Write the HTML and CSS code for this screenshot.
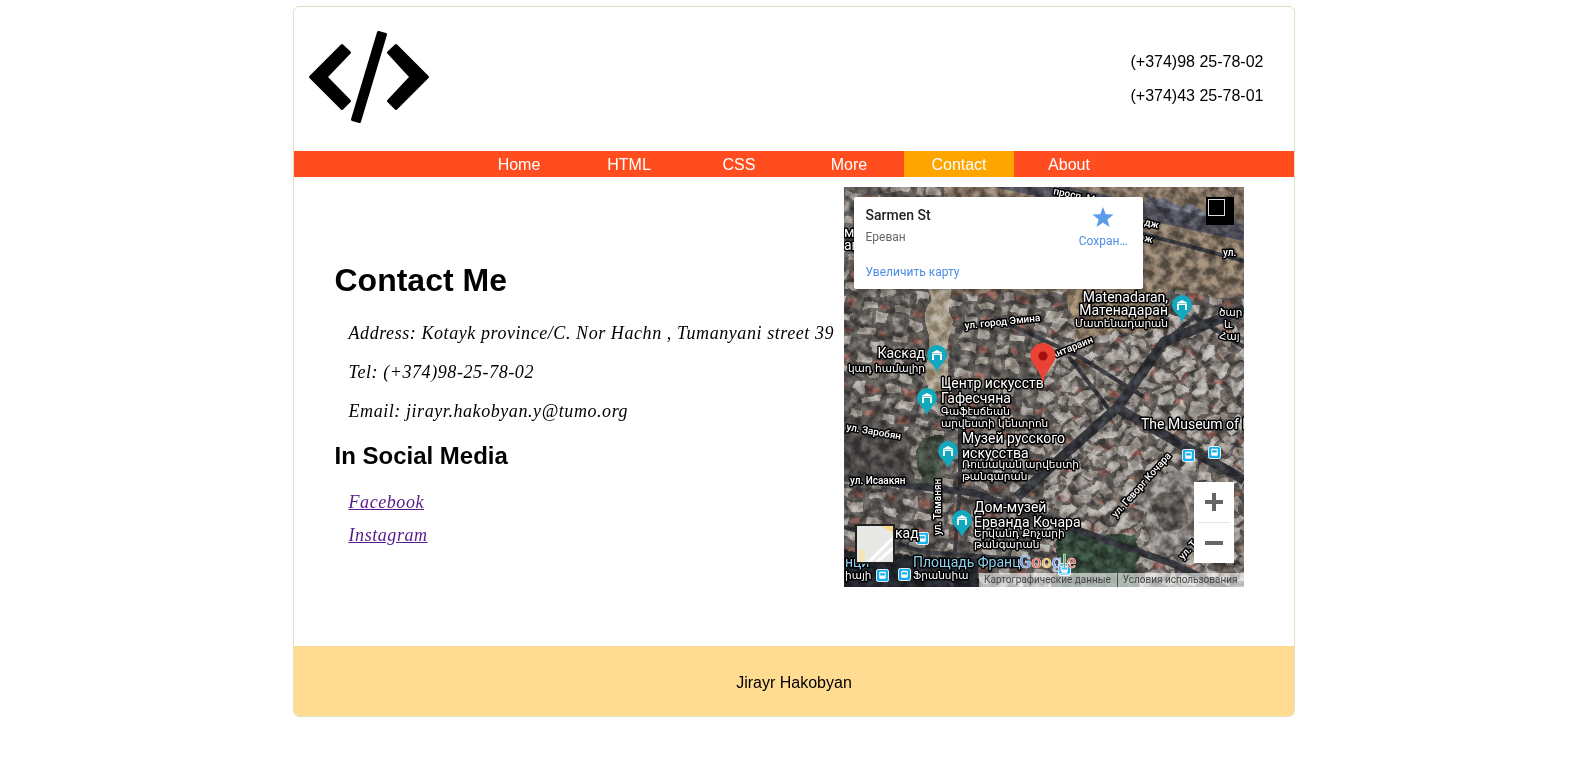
FILE: index.html
```html
<!DOCTYPE html>
<html lang="en">
<head>
    <meta charset="UTF-8">
    <meta name="viewport" content="width=device-width, initial-scale=1.0">
    <title>Contact</title>
    <link rel="stylesheet" href="styles.css">
</head>
<body>
    <div class="wrapper">
        <!-- Header -->
        <header class="header">
            <svg class="logo" width="122" height="94" viewBox="308 30 122 94">
                <polygon class="logo-shape" points="310.5,77 342,45.5 349.5,52.5 326,77 349.5,101 342,108.5"/>
                <polygon class="logo-shape" points="427.5,77 396,45.500 388.500,52.500 411,77 388.500,101 396,108.500"/>
                <polygon class="logo-shape" points="378.5,32.5 385.5,34.5 359.5,121.5 352.5,119.5"/>
            </svg>
            <div class="phones">
                <p>(+374)98 25-78-02</p>
                <p>(+374)43 25-78-01</p>
            </div>
        </header>

        <!-- Navigation -->
        <nav class="nav">
            <a href="#">Home</a>
            <a href="#">HTML</a>
            <a href="#">CSS</a>
            <a href="#">More</a>
            <a href="#" class="active">Contact</a>
            <a href="#">About</a>
        </nav>

        <!-- Main content -->
        <main class="main">
            <section class="info">
                <h1>Contact Me</h1>
                <p>Address: Kotayk province/C. Nor Hachn , Tumanyani street 39</p>
                <p>Tel: (+374)98-25-78-02</p>
                <p>Email: jirayr.hakobyan.y@tumo.org</p>
                <h2>In Social Media</h2>
                <a class="social" href="#">Facebook</a>
                <a class="social" href="#">Instagram</a>
            </section>

            <div class="map">
                <svg class="map-img" width="400" height="400" viewBox="0 0 400 400">
                    <defs>
                        <filter id="noise" x="0" y="0" width="100%" height="100%" color-interpolation-filters="sRGB">
                            <feTurbulence type="fractalNoise" baseFrequency="0.11" numOctaves="3" seed="7"/>
                            <feColorMatrix type="matrix" values="2.4 0 0 0 -0.7  2.3 0 0 0 -0.68  2.3 0 0 0 -0.66  0 0 0 0 1"/>
                        </filter>
                        <filter id="rough" x="-10%" y="-10%" width="120%" height="120%">
                            <feTurbulence type="fractalNoise" baseFrequency="0.05" numOctaves="2" seed="3" result="warp"/>
                            <feDisplacementMap in="SourceGraphic" in2="warp" scale="14" xChannelSelector="R" yChannelSelector="G"/>
                        </filter>
                        <pattern id="blocks-a" width="34" height="27" patternUnits="userSpaceOnUse" patternTransform="rotate(8)">
                            <rect x="2" y="2" width="13" height="8" fill="#b5b0a8"/>
                            <rect x="18" y="3" width="11" height="6" fill="#8f5c50"/>
                            <rect x="3" y="15" width="8" height="9" fill="#8a8680"/>
                            <rect x="15" y="14" width="14" height="8" fill="#c0bbb2"/>
                        </pattern>
                        <pattern id="blocks-b" width="30" height="24" patternUnits="userSpaceOnUse" patternTransform="rotate(-42)">
                            <rect x="2" y="2" width="16" height="7" fill="#bcb9b2"/>
                            <rect x="21" y="3" width="7" height="7" fill="#75695f"/>
                            <rect x="3" y="13" width="9" height="8" fill="#96928c"/>
                            <rect x="15" y="13" width="12" height="8" fill="#a8a49c"/>
                        </pattern>
                        <symbol id="poi" viewBox="0 0 20 27">
                            <path d="M10 0a10 10 0 0 1 10 10c0 6-7 9-10 17C7 19 0 16 0 10A10 10 0 0 1 10 0z" fill="#12a8bd"/>
                            <polygon points="4.500,8 10,5 15.500,8" fill="#fff"/>
                            <rect x="5" y="8.500" width="10" height="6.500" fill="#fff"/>
                            <rect x="7" y="10" width="6" height="5" fill="#12a8bd"/>
                        </symbol>
                        <symbol id="bus" viewBox="0 0 14 14">
                            <rect x="0.500" y="0.500" width="13" height="13" rx="2" fill="#18b0ee" stroke="#fff"/>
                            <rect x="3.500" y="3" width="7" height="7.500" rx="1" fill="#fff"/>
                            <rect x="4.500" y="4.500" width="5" height="2.500" fill="#18b0ee"/>
                        </symbol>
                    </defs>

                    <!-- ground -->
                    <rect width="400" height="400" fill="#55534f"/>
                    <g filter="url(#rough)">
                        <rect x="-30" y="-30" width="460" height="460" fill="#55534f"/>
                        <rect x="-30" y="-30" width="460" height="460" fill="url(#blocks-a)" opacity="0.7"/>
                        <polygon points="200,130 430,130 430,430 200,430" fill="url(#blocks-b)" opacity="0.75"/>
                        <polygon points="100,-30 430,-30 430,110 300,105 296,118 230,105 100,105" fill="#7b6f5e"/>
                        <polygon points="225,103 305,103 320,140 230,150" fill="#85765f"/>
                        <polygon points="84,100 106,100 106,205 84,205" fill="#a39a86"/>
                        <polygon points="75,250 98,250 98,298 75,298" fill="#3f4c40"/>
                        <polygon points="0,230 60,240 70,300 -30,290" fill="#4b4a46"/>
                        <polygon points="215,345 290,350 300,430 205,430" fill="#34493a"/>
                        <polygon points="290,300 345,280 368,345 318,372" fill="#83817b"/>
                        <polygon points="306,310 338,302 348,335 320,348" fill="#5c5a54"/>
                        <polygon points="-30,362 135,372 135,430 -30,430" fill="#24262a"/>
                        <polygon points="300,10 430,40 430,60 300,32" fill="#646670"/>
                    </g>

                    <!-- roads -->
                    <path class="road road-top" d="M150 -8L400 46"/>
                    <path class="road road-thin" d="M296 46L400 74"/>
                    <path class="road" d="M0 291L130 306 329 377 400 410"/>
                    <path class="road road-wide" d="M173 310L273 221 320 155 400 122"/>
                    <path class="road road-wide" d="M273 221L400 293"/>
                    <path class="road road-thin" d="M116 200L116 300 108 400"/>
                    <path class="road road-thin" d="M0 340L80 365 215 375"/>
                    <path class="road road-thin" d="M150 130L236 170 300 210"/>
                    <path class="road road-thin" d="M320 155L350 130 400 160"/>
                    <path class="road road-thin" d="M268 226L225 170"/>

                    <rect width="400" height="400" filter="url(#noise)" opacity="0.35" class="map-noise"/>

                    <!-- places -->
                    <use href="#poi" x="328" y="108" width="20" height="27"/>
                    <use href="#poi" x="83" y="158" width="20" height="27"/>
                    <use href="#poi" x="73" y="201" width="20" height="27"/>
                    <use href="#poi" x="94" y="254" width="20" height="27"/>
                    <use href="#poi" x="108" y="323" width="20" height="27"/>
                    <use href="#bus" x="338" y="262" width="13" height="13"/>
                    <use href="#bus" x="364" y="259" width="13" height="13"/>
                    <use href="#bus" x="72" y="345" width="13" height="13"/>
                    <use href="#bus" x="54" y="381" width="13" height="13"/>
                    <use href="#bus" x="32" y="382" width="13" height="13"/>
                    <use href="#bus" x="214" y="376" width="13" height="13"/>

                    <text class="lbl lbl-big lbl-end" x="324" y="115">Matenadaran,</text>
                    <text class="lbl lbl-big lbl-end" x="324" y="128">Матенадаран</text>
                    <text class="lbl lbl-sm lbl-end" x="324" y="140">Մատենադարան</text>
                    <text class="lbl lbl-road" transform="translate(121 142) rotate(-6)">ул. город Эмина</text>
                    <text class="lbl lbl-road" transform="translate(208 172) rotate(-22)">Антараин</text>
                    <text class="lbl lbl-big lbl-end" x="81" y="171">Каскад</text>
                    <text class="lbl lbl-sm lbl-end" x="81" y="185">կադ համալիր</text>
                    <text class="lbl lbl-big" x="97" y="201">Центр искусств</text>
                    <text class="lbl lbl-big" x="97" y="216">Гафесчяна</text>
                    <text class="lbl lbl-sm" x="97" y="228">Գաֆէսճեան</text>
                    <text class="lbl lbl-sm" x="97" y="240">արվեստի կենտրոն</text>
                    <text class="lbl lbl-road" transform="translate(2 243) rotate(10)">ул. Заробян</text>
                    <text class="lbl lbl-big" x="118" y="256">Музей русского</text>
                    <text class="lbl lbl-big" x="118" y="271">искусства</text>
                    <text class="lbl lbl-sm" x="118" y="281">Ռուսական արվեստի</text>
                    <text class="lbl lbl-sm" x="118" y="293">թանգարան</text>
                    <text class="lbl lbl-road" x="6" y="297">ул. Исаакян</text>
                    <text class="lbl lbl-road" transform="translate(97 348) rotate(-90)">ул. Таманян</text>
                    <text class="lbl lbl-big" x="130" y="325">Дом-музей</text>
                    <text class="lbl lbl-big" x="130" y="340">Ерванда Кочара</text>
                    <text class="lbl lbl-sm" x="130" y="350">Երվանդ Քոչարի</text>
                    <text class="lbl lbl-sm" x="130" y="361">թանգարան</text>
                    <text class="lbl lbl-big" x="297" y="242">The Museum of F</text>
                    <text class="lbl lbl-road" transform="translate(272 331) rotate(-48)">ул. Геворг Кочара</text>
                    <text class="lbl lbl-road" transform="translate(339 373) rotate(-48)">ул. Т</text>
                    <text class="lbl lbl-big" x="51" y="351">кад</text>
                    <text class="lbl lbl-big lbl-water" x="69" y="380">Площадь Франц</text>
                    <text class="lbl lbl-big lbl-water" x="1" y="380">нци</text>
                    <text class="lbl lbl-sm" x="69" y="392">Ֆրանսիա</text>
                    <text class="lbl lbl-sm" x="1" y="392">իայի</text>
                    <text class="lbl lbl-road" transform="translate(209 7) rotate(12)">просп. М</text>
                    <text class="lbl lbl-road" transform="translate(300 38) rotate(14)">дж</text>
                    <text class="lbl lbl-road" transform="translate(300 54) rotate(14)">ж</text>
                    <text class="lbl lbl-road" x="379" y="69">ул.</text>
                    <text class="lbl lbl-big" x="0" y="50">му</text>
                    <text class="lbl lbl-big" x="0" y="63">ав</text>
                    <text class="lbl lbl-sm" x="375" y="129">ծար</text>
                    <text class="lbl lbl-sm" x="380" y="141">և</text>
                    <text class="lbl lbl-sm" x="375" y="153">Հայ</text>

                    <!-- pin -->
                    <path d="M199 156a12.500 12.500 0 0 1 12.500 12.500c0 9-9.500 13-12.500 27.500-3-14.500-12.500-18.500-12.500-27.500A12.500 12.500 0 0 1 199 156z" fill="#ea4335"/>
                    <circle cx="199" cy="169" r="4.500" fill="#a50e0e"/>

                    <!-- google logo -->
                    <text class="gl" x="175" y="381"><tspan fill="#6a94e8">G</tspan><tspan fill="#e2564a">o</tspan><tspan fill="#f2b93a">o</tspan><tspan fill="#6a94e8">g</tspan><tspan fill="#57b06a">l</tspan><tspan fill="#e2564a">e</tspan></text>
                </svg>

                <!-- map controls -->
                <div class="popup">
                    <div class="popup-top">
                        <div>
                            <div class="popup-title">Sarmen St</div>
                            <div class="popup-sub">Ереван</div>
                        </div>
                        <div class="popup-save">
                            <svg width="22" height="22" viewBox="0 0 24 24"><polygon fill="#5b9bea" points="12,1 15,9 23.500,9.300 16.800,14.600 19.200,23 12,18.200 4.800,23 7.200,14.600 0.500,9.300 9,9"/></svg>
                            <span>Сохран…</span>
                        </div>
                    </div>
                    <a class="popup-link" href="#">Увеличить карту</a>
                </div>
                <div class="fullscreen"><span></span></div>
                <div class="zoom">
                    <svg width="40" height="40" viewBox="0 0 40 40"><path d="M11 20H29M20 11V29" stroke="#666" stroke-width="4"/></svg>
                    <div class="zoom-line"></div>
                    <svg width="40" height="40" viewBox="0 0 40 40"><path d="M11 20H29" stroke="#666" stroke-width="4"/></svg>
                </div>
                <div class="thumb">
                    <svg width="36" height="36" viewBox="0 0 36 36">
                        <rect width="36" height="36" fill="#e8e8e6"/>
                        <polygon points="24,0 36,0 36,7" fill="#f6dc8c"/>
                        <path d="M12 36L36 12M20 36L36 22" stroke="#fff" stroke-width="3"/>
                        <rect x="2" y="24" width="6" height="12" fill="#f5e4b4"/>
                    </svg>
                </div>
                <div class="terms">
                    <span>Картографические данные</span>
                    <span>Условия использования</span>
                </div>
            </div>
        </main>

        <!-- Footer -->
        <footer class="footer">Jirayr Hakobyan</footer>
    </div>
</body>
</html>
```

FILE: styles.css
```css
/* Global Styles */
body {
    font-family: 'Liberation Sans', Arial, sans-serif;
    background-color: #ffffff;
    color: #000;
    margin: 0;
    padding: 0;
}

.wrapper {
    width: 1000px;
    margin: 6px auto 0;
    border: 1px solid #e0e0c4;
    border-radius: 6px;
    overflow: hidden;
}

/* Header */
.header {
    height: 144px;
    display: flex;
    justify-content: space-between;
    align-items: flex-start;
    padding: 0 30px 0 14px;
    box-sizing: border-box;
}

.logo {
    margin-top: 23px;
}

.logo-shape {
    fill: #000;
    stroke: #000;
    stroke-width: 3;
    stroke-linejoin: round;
}

.phones {
    width: 133px;
    padding-top: 46px;
    font-size: 16px;
}

.phones p {
    margin: 0 0 16px;
    line-height: 18px;
}

/* Navigation */
.nav {
    height: 26px;
    background-color: #ff4d1f;
    display: flex;
    justify-content: center;
}

.nav a {
    width: 110px;
    box-sizing: border-box;
    padding-left: 1px;
    color: #fff;
    font-size: 16px;
    line-height: 28px;
    text-align: center;
    text-decoration: none;
}

.nav a.active {
    background-color: #ffa500;
}

/* Main */
.main {
    height: 469px;
    display: flex;
    justify-content: space-between;
    padding: 10px 50px 0 41px;
    box-sizing: border-box;
}

.info {
    padding-top: 75px;
    font-family: 'Liberation Serif', serif;
    font-style: italic;
    font-size: 18px;
}

.info h1 {
    font-family: 'Liberation Sans', Arial, sans-serif;
    font-style: normal;
    font-size: 32px;
    line-height: 37px;
    margin: 0 0 23px;
}

.info h2 {
    font-family: 'Liberation Sans', Arial, sans-serif;
    font-style: normal;
    font-size: 24px;
    line-height: 28px;
    margin: 20px 0 21px;
}

.info p {
    margin: 0 0 17px 14px;
    line-height: 22px;
    letter-spacing: 0.57px;
    white-space: nowrap;
}

.social {
    display: block;
    width: max-content;
    margin: 0 0 11px 14px;
    line-height: 22px;
    letter-spacing: 0.57px;
    color: #551a8b;
}

/* Map */
.map {
    position: relative;
    width: 400px;
    height: 400px;
    flex: none;
    overflow: hidden;
    font-family: Roboto, 'Liberation Sans', sans-serif;
}

.map-img {
    display: block;
}

.map-noise {
    mix-blend-mode: overlay;
}

.lbl {
    font-family: Roboto, 'DejaVu Sans', sans-serif;
    fill: #fff;
    stroke: #000;
    stroke-width: 3px;
    paint-order: stroke;
    stroke-linejoin: round;
}

.lbl-big {
    font-size: 14px;
}

.lbl-sm {
    font-family: 'DejaVu Sans', sans-serif;
    font-size: 10.5px;
}

.lbl-road {
    font-size: 10px;
    font-weight: 500;
}

.lbl-end {
    text-anchor: end;
}

.lbl-water {
    fill: #8fd0f0;
}

.road {
    fill: none;
    stroke: #33363b;
    stroke-width: 7;
}

.road-wide {
    stroke-width: 10;
}

.road-top {
    stroke: #4a4c55;
    stroke-width: 16;
}

.road-thin {
    stroke-width: 4;
}

.gl {
    font-family: Roboto, sans-serif;
    font-size: 18px;
    font-weight: 500;
    stroke: #fff;
    stroke-width: 0.5px;
}

.popup {
    position: absolute;
    left: 10px;
    top: 10px;
    width: 289px;
    height: 92px;
    padding: 10px 12px;
    box-sizing: border-box;
    background-color: #fff;
    border-radius: 2px;
    box-shadow: 0 1px 4px rgba(0, 0, 0, 0.3);
}

.popup-top {
    display: flex;
    justify-content: space-between;
}

.popup-title {
    font-size: 14px;
    font-weight: 500;
    line-height: 16px;
    color: #222;
}

.popup-sub {
    margin-top: 7px;
    font-size: 12px;
    line-height: 14px;
    color: #666;
}

.popup-save {
    display: flex;
    flex-direction: column;
    align-items: center;
    margin: -1px 3px 0 0;
    font-size: 12px;
    color: #4a8de8;
}

.popup-save span {
    margin-top: 6px;
}

.popup-link {
    display: block;
    margin-top: 17px;
    font-size: 12px;
    line-height: 14px;
    color: #4a8de8;
    text-decoration: none;
}

.fullscreen {
    position: absolute;
    left: 362px;
    top: 10px;
    width: 28px;
    height: 28px;
    background-color: #000;
}

.fullscreen span {
    display: block;
    width: 15px;
    height: 15px;
    margin: 2px;
    border: 1px solid #ddd;
}

.zoom {
    position: absolute;
    left: 350px;
    top: 295px;
    width: 40px;
    height: 81px;
    background-color: #fff;
}

.zoom svg {
    display: block;
}

.zoom-line {
    width: 32px;
    height: 1px;
    margin: 0 auto;
    background-color: #e6e6e6;
}

.thumb {
    position: absolute;
    left: 11px;
    top: 337px;
    width: 36px;
    height: 36px;
    border: 2px solid #222;
}

.thumb svg {
    display: block;
}

.terms {
    position: absolute;
    right: 0;
    bottom: 0;
    display: flex;
    height: 14px;
    font-size: 10px;
    line-height: 14px;
    color: #444;
}

.terms span {
    padding: 0 6px 0 5px;
    background-color: rgba(255, 255, 255, 0.6);
}

.terms span + span {
    margin-left: 1px;
}

/* Footer */
.footer {
    height: 70px;
    padding-left: 1px;
    background-color: #ffdc91;
    font-size: 16px;
    line-height: 73px;
    text-align: center;
}
```
